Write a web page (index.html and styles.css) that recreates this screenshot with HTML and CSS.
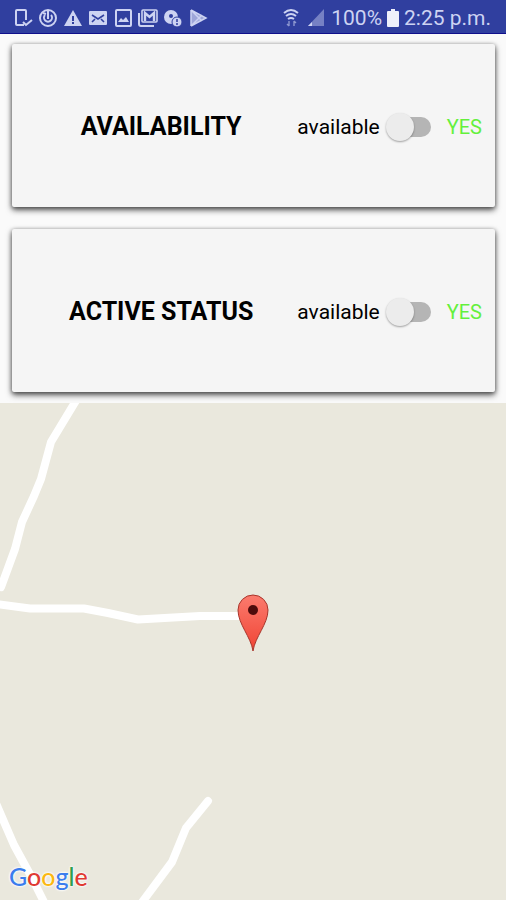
FILE: index.html
```html
<!DOCTYPE html>
<html lang="en">

<head>
    <meta charset="UTF-8">
    <meta name="viewport" content="width=device-width, initial-scale=1.0">
    <title>Availability</title>
    <link rel="stylesheet" href="styles.css">
</head>

<body>
    <header class="statusBar">
        <div class="notifications">
            <svg class="icon" viewBox="0 0 20 20">
                <path d="M11 17H4Q3 17 3 16V3Q3 2 4 2H12Q13 2 13 3V12" fill="none" stroke="currentColor" stroke-width="2" />
                <path d="M10 14l3 3 6-5" fill="none" stroke="currentColor" stroke-width="2" />
            </svg>
            <svg class="icon" viewBox="0 0 20 20" fill="none" stroke="currentColor">
                <circle cx="10" cy="10" r="8" stroke-width="2" />
                <path d="M7 7a4 4 0 1 0 6 0" stroke-width="2" />
                <path d="M10 3v8M5 5l3 1" stroke-width="2" />
            </svg>
            <svg class="icon" viewBox="0 0 20 20">
                <path d="M10 2l9 16H1z" fill="currentColor" />
                <path d="M10 8v5M10 14v2" stroke="#303f9f" stroke-width="2" />
            </svg>
            <svg class="icon" viewBox="0 0 20 20">
                <rect x="1" y="3" width="18" height="14" rx="1" fill="currentColor" />
                <path d="M4 7l6 4 6-4M4 14l3-3M16 14l-3-3" fill="none" stroke="#303f9f" stroke-width="1.6" />
            </svg>
            <svg class="icon" viewBox="0 0 20 20">
                <rect x="3" y="2" width="15" height="16" rx="1" fill="none" stroke="currentColor" stroke-width="2" />
                <path d="M5 14l3-4 2 2 3-3 3 5z" fill="currentColor" />
            </svg>
            <svg class="icon" viewBox="0 0 20 20" fill="none" stroke="currentColor">
                <path d="M1 5v11q0 2 2 2h13" stroke-width="2" />
                <rect x="4" y="2" width="15" height="12" rx="1" stroke-width="1.6" />
                <path d="M7 13V5l4.500 4L16 5v8" stroke-width="2.4" />
            </svg>
            <svg class="icon" viewBox="0 0 20 20">
                <circle cx="8" cy="9" r="7" fill="currentColor" />
                <circle cx="8" cy="8" r="2" fill="#303f9f" />
                <circle cx="14" cy="14" r="5" fill="currentColor" stroke="#303f9f" />
                <path d="M14 11v3M14 15v2" stroke="#303f9f" stroke-width="1.500" />
            </svg>
            <svg class="icon" viewBox="0 0 20 20">
                <path d="M3 2l15 8-15 8z" fill="currentColor" opacity=".7" />
                <path d="M3 2l11 11M3 18L14 7M3 2v16M3 2l15 8-15 8" fill="none" stroke="currentColor" stroke-width="1.500" />
            </svg>
        </div>
        <div class="system">
            <svg class="icon" viewBox="0 0 20 20" fill="none" stroke="currentColor">
                <path d="M3 5q7-6 14 0M5 8q5-4 10 0M7 11q3-2 6 0" stroke-width="2" />
                <path d="M8 13v5M6 16l2 2M13 18v-5M15 15l-2-2" stroke-width="1.400" opacity=".6" />
            </svg>
            <svg class="icon" viewBox="0 0 20 20">
                <path d="M18 1v17H2z" fill="currentColor" opacity=".45" />
                <path d="M6 14v4H2z" fill="currentColor" />
            </svg>
            <span>100%</span>
            <svg class="battery" viewBox="0 0 12 18">
                <path d="M4 0h4v2h3q1 0 1 1v14q0 1-1 1H1q-1 0-1-1V3q0-1 1-1h3z" fill="#eef0fb" />
            </svg>
            <time class="clock">2:25 p.m.</time>
        </div>
    </header>

    <main class="content">
        <div class="cards">
            <section class="card">
                <h2>AVAILABILITY</h2>
                <label for="availability">available</label>
                <input class="switch" type="checkbox" id="availability">
                <span class="answer">YES</span>
            </section>
            <section class="card">
                <h2>ACTIVE STATUS</h2>
                <label for="active">available</label>
                <input class="switch" type="checkbox" id="active">
                <span class="answer">YES</span>
            </section>
        </div>

        <div class="map">
            <svg class="roads" viewBox="0 0 506 497" preserveAspectRatio="xMidYMid slice">
                <defs>
                    <linearGradient id="pinFill" x1="0" y1="0" x2="0" y2="1">
                        <stop offset="0" stop-color="#fb7b6e" />
                        <stop offset="1" stop-color="#f04434" />
                    </linearGradient>
                </defs>
                <g fill="none" stroke="#fff" stroke-width="8" stroke-linejoin="round" stroke-linecap="round">
                    <path d="M77-4L51 39 41 76 34 93 22 119 15 146 1 184" />
                    <path d="M-4 201L30 205.500H84L108 210 138 216.500 200 213H253" />
                    <path d="M-5 398L14 442 32 475 47 505" />
                    <path d="M208 398L186 425 172 459 140 502" />
                </g>
                <path d="M253 248C251 234 238 221 238 207a15 15 0 0 1 30 0C268 221 255 234 253 248z" fill="url(#pinFill)" stroke="#a8352b" />
                <circle cx="253" cy="207" r="5" fill="#4d0b0b" />
            </svg>
            <div class="google"><span class="blue">G</span><span class="red">o</span><span class="yellow">o</span><span class="blue">g</span><span class="green">l</span><span class="red">e</span></div>
        </div>
    </main>
</body>

</html>
```
FILE: styles.css
```css
* {
    box-sizing: border-box;
}

body {
    min-height: 100vh;
    margin: 0;
    display: flex;
    flex-direction: column;
    background: #fafafa;
    color: #000;
    font-family: Roboto, "Liberation Sans", sans-serif;
}

.statusBar {
    display: flex;
    justify-content: space-between;
    align-items: center;
    height: 34px;
    padding: 3px 15px 0 13px;
    background: #303f9f;
    border-bottom: 1px solid #10108c;
    color: #cdd3f2;
    font-size: 21px;
    line-height: 28px;
}

.notifications,
.system {
    display: flex;
    align-items: center;
    gap: 5px;
}

.icon {
    width: 20px;
    height: 20px;
}

.battery {
    width: 12px;
    height: 18px;
}

.content {
    flex: 1;
    display: flex;
    flex-direction: column;
}

.cards {
    display: flex;
    flex-direction: column;
    gap: 22px;
    padding: 10px 11px 11px 12px;
}

.card {
    display: flex;
    align-items: center;
    min-height: 163px;
    padding: 2px 13px 0;
    background: #f5f5f5;
    border-radius: 2px;
    box-shadow: 0 3px 6px rgba(0, 0, 0, 0.6), 0 1px 4px rgba(0, 0, 0, 0.4);
    font-size: 21px;
}

.card h2 {
    flex: 1;
    margin: 0;
    font-size: 25px;
    font-weight: 700;
    text-align: center;
}

.switch {
    appearance: none;
    display: flex;
    align-items: center;
    width: 42px;
    height: 20px;
    margin: 0 16px 0 9px;
    border-radius: 10px;
    background: #b5b5b5;
    cursor: pointer;
}

.switch::before {
    content: "";
    width: 28px;
    height: 28px;
    margin-left: -3px;
    border-radius: 50%;
    background: #ececec;
    box-shadow: 0 1px 2px rgba(0, 0, 0, 0.35);
}

.switch:checked::before {
    margin-left: 17px;
}

.answer {
    color: #64f03c;
    font-size: 20px;
}

.map {
    flex: 1;
    position: relative;
    min-height: 300px;
    overflow: hidden;
    background: #eae8dd;
}

/* fills the map area whatever height is left */
.roads {
    position: absolute;
    width: 100%;
    height: 100%;
}

.google {
    position: absolute;
    left: 9px;
    bottom: 9px;
    font-family: Lato, sans-serif;
    font-size: 25px;
    font-weight: 500;
    line-height: 30px;
    text-shadow: 0 0 2px #fff, 0 0 2px #fff, 0 0 3px #fff;
}

.blue {
    color: #3b7ded;
}

.red {
    color: #e03a32;
}

.yellow {
    color: #fbb811;
}

.green {
    color: #2f9e4c;
}
```
